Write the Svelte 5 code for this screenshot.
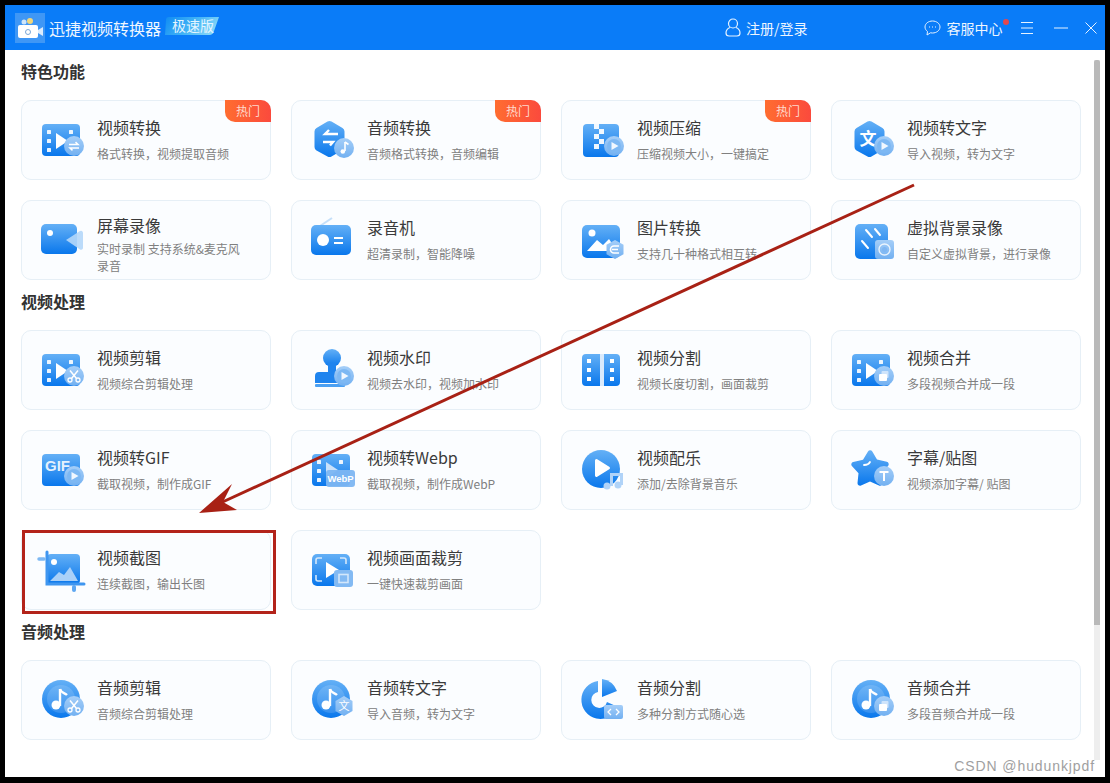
<script>
	let sections = [
		{
			title: '特色功能',
			items: [
				{ name: '视频转换', desc: '格式转换，视频提取音频', icon: 'film', badge: 'swap', hot: true },
				{ name: '音频转换', desc: '音频格式转换，音频编辑', icon: 'hexswap', badge: 'note', hot: true },
				{ name: '视频压缩', desc: '压缩视频大小，一键搞定', icon: 'zip', badge: 'play', hot: true },
				{ name: '视频转文字', desc: '导入视频，转为文字', icon: 'hextext', badge: 'play' },
				{ name: '屏幕录像', desc: '实时录制 支持系统&麦克风录音', icon: 'camera' },
				{ name: '录音机', desc: '超清录制，智能降噪', icon: 'radio' },
				{ name: '图片转换', desc: '支持几十种格式相互转', icon: 'photo', badge: 'hexc' },
				{ name: '虚拟背景录像', desc: '自定义虚拟背景，进行录像', icon: 'virtual' }
			]
		},
		{
			title: '视频处理',
			items: [
				{ name: '视频剪辑', desc: '视频综合剪辑处理', icon: 'film', badge: 'cut' },
				{ name: '视频水印', desc: '视频去水印，视频加水印', icon: 'stamp', badge: 'play' },
				{ name: '视频分割', desc: '视频长度切割，画面裁剪', icon: 'split' },
				{ name: '视频合并', desc: '多段视频合并成一段', icon: 'film', badge: 'merge' },
				{ name: '视频转GIF', desc: '截取视频，制作成GIF', icon: 'gif', badge: 'play' },
				{ name: '视频转Webp', desc: '截取视频，制作成WebP', icon: 'webp' },
				{ name: '视频配乐', desc: '添加/去除背景音乐', icon: 'musicplay' },
				{ name: '字幕/贴图', desc: '视频添加字幕/ 贴图', icon: 'star', badge: 'tee' },
				{ name: '视频截图', desc: '连续截图，输出长图', icon: 'crop' },
				{ name: '视频画面裁剪', desc: '一键快速裁剪画面', icon: 'frame' }
			]
		},
		{
			title: '音频处理',
			items: [
				{ name: '音频剪辑', desc: '音频综合剪辑处理', icon: 'disc', badge: 'cut' },
				{ name: '音频转文字', desc: '导入音频，转为文字', icon: 'disc', badge: 'wen' },
				{ name: '音频分割', desc: '多种分割方式随心选', icon: 'pie' },
				{ name: '音频合并', desc: '多段音频合并成一段', icon: 'disc', badge: 'merge' }
			]
		}
	];
</script>

{#snippet filmHoles()}
	<rect x="6" y="12" width="4" height="4" rx="0.6" fill="#fff" opacity="0.9" />
	<rect x="6" y="21" width="4" height="4" rx="0.6" fill="#fff" opacity="0.9" />
	<rect x="6" y="30" width="4" height="4" rx="0.6" fill="#fff" opacity="0.9" />
	<rect x="28" y="12" width="4" height="4" rx="0.6" fill="#fff" opacity="0.9" />
{/snippet}

{#snippet badgeArt(kind)}
	{#if kind === 'play'}
		<circle cx="33" cy="28" r="10" fill="url(#soft)" />
		<circle cx="33" cy="28" r="7" fill="#7db8f3" />
		<path d="M30.5 24l7 4-7 4z" fill="#f2f8ff" />
	{:else if kind === 'swap'}
		<circle cx="33" cy="28" r="10" fill="url(#soft)" />
		<path d="M28 26.5h9l-2.5-2.4M38 30h-9l2.5 2.4" fill="none" stroke="#fff" stroke-width="1.5" />
	{:else if kind === 'note'}
		<circle cx="33" cy="30" r="10" fill="url(#soft)" />
		<path d="M34 24v9" stroke="#fff" stroke-width="1.6" />
		<path d="M34 24l3.5 2.5" stroke="#fff" stroke-width="1.6" />
		<circle cx="31.8" cy="33.5" r="2.3" fill="#fff" />
	{:else if kind === 'cut'}
		<circle cx="33" cy="28" r="10" fill="url(#soft)" />
		<path d="M29 22.5l6.5 8M37 22.5l-6.5 8" stroke="#fff" stroke-width="1.5" />
		<circle cx="29" cy="32" r="2" fill="none" stroke="#fff" stroke-width="1.3" />
		<circle cx="37" cy="32" r="2" fill="none" stroke="#fff" stroke-width="1.3" />
	{:else if kind === 'merge'}
		<circle cx="33" cy="28" r="10" fill="url(#soft)" />
		<rect x="30.5" y="23" width="7" height="7" rx="1" fill="#cfe4fb" />
		<rect x="28" y="26" width="8" height="7" rx="1" fill="#fff" />
	{:else if kind === 'tee'}
		<circle cx="33" cy="28" r="10" fill="url(#soft)" />
		<path d="M28.5 24h9M33 24v9" stroke="#fff" stroke-width="2" />
	{:else if kind === 'wen'}
		<path d="M33 18l8.5 5v10l-8.5 5-8.5-5V23z" fill="url(#soft)" />
		<text x="33" y="32" class="mini">文</text>
	{:else if kind === 'hexc'}
		<path d="M34 22l8.500 4.800v9.400L34 41l-8.500-4.800v-9.400z" fill="url(#soft)" />
		<path d="M38 28h-5a3 3 0 0 0 0 7h5M31 31.500h6" fill="none" stroke="#fff" stroke-width="1.600" />
	{/if}
{/snippet}

{#snippet iconArt(kind)}
	{#if kind === 'film'}
		<rect x="1" y="6" width="38" height="32" rx="4" fill="url(#body)" />
		{@render filmHoles()}
		<path d="M15 15l12 8-12 8z" fill="#fff" />
	{:else if kind === 'hexswap'}
		<path d="M18 4.500a4 4 0 0 1 4 0l11 6.500a4 4 0 0 1 2 3.500v15a4 4 0 0 1-2 3.500l-11 6.500a4 4 0 0 1-4 0L7 33.500a4 4 0 0 1-2-3.500V14.500a4 4 0 0 1 2-3.500z" transform="translate(-1.500 -1)" fill="url(#body)" />
		<path d="M27 16H14l4-4M12 24h10l-3 3.500" fill="none" stroke="#fff" stroke-width="2.400" />
	{:else if kind === 'hextext'}
		<path d="M18 4.500a4 4 0 0 1 4 0l11 6.500a4 4 0 0 1 2 3.500v15a4 4 0 0 1-2 3.500l-11 6.500a4 4 0 0 1-4 0L7 33.500a4 4 0 0 1-2-3.500V14.500a4 4 0 0 1 2-3.500z" transform="translate(-1.500 -1)" fill="url(#body)" />
		<text x="17" y="27" class="wen">文</text>
	{:else if kind === 'zip'}
		<rect x="2" y="6" width="36" height="33" rx="4" fill="url(#body)" />
		<path d="M13 6h5v5h-5zM18 11h5v5h-5zM13 16h5v5h-5zM18 21h5v5h-5zM13 26h5v5h-5z" fill="#fff" opacity="0.92" />
	{:else if kind === 'camera'}
		<rect x="0" y="6" width="36" height="30" rx="5" fill="url(#body)" />
		<circle cx="9" cy="15" r="3" fill="#fff" />
		<path d="M25 22l14-9a2 2 0 0 1 3 1.500v15.500a2 2 0 0 1-3 1.500z" fill="#b4d7fa" opacity="0.9" />
	{:else if kind === 'radio'}
		<path d="M9 8l12-8" stroke="#c5dff9" stroke-width="2" />
		<rect x="0" y="7" width="40" height="30" rx="5" fill="url(#body)" />
		<circle cx="12" cy="22" r="6" fill="#fff" />
		<path d="M23 20h9M23 25h9" stroke="#fff" stroke-width="2" />
	{:else if kind === 'photo'}
		<rect x="1" y="7" width="38" height="33" rx="5" fill="url(#body)" />
		<circle cx="11" cy="15" r="3.500" fill="#fff" />
		<path d="M6 33l10-11 6 5 6-6 8 12z" fill="#fff" />
	{:else if kind === 'virtual'}
		<rect x="4" y="6" width="33" height="35" rx="5" fill="url(#body)" />
		<path d="M15 12l6 7M11 23l6 7M24 11l5 6" stroke="#fff" stroke-width="2" stroke-linecap="round" />
		<rect x="24" y="22" width="19" height="19" rx="3" fill="url(#soft)" />
		<circle cx="33.500" cy="31.500" r="5.500" fill="none" stroke="#fff" stroke-width="1.400" opacity="0.8" />
		<circle cx="33.500" cy="31.500" r="2.500" fill="#7fb6f2" />
	{:else if kind === 'stamp'}
		<circle cx="21" cy="10" r="9" fill="url(#body)" />
		<path d="M17 15h8v9h5a4 4 0 0 1 4 4v7H4v-7a4 4 0 0 1 4-4h9z" fill="#1f84ee" />
		<rect x="4" y="36" width="30" height="3" rx="1" fill="#4ba0f2" />
	{:else if kind === 'split'}
		<path d="M5 6h14v32H5a4 4 0 0 1-4-4V10a4 4 0 0 1 4-4zM23 6h12a4 4 0 0 1 4 4v24a4 4 0 0 1-4 4H23z" fill="url(#body)" />
		<rect x="19" y="6" width="4" height="32" fill="#d9eafc" />
		<path d="M6 11h4v4H6zM6 20h4v4H6zM6 29h4v4H6zM29 11h4v4h-4zM29 20h4v4h-4zM29 29h4v4h-4z" fill="#fff" />
	{:else if kind === 'gif'}
		<rect x="1" y="6" width="38" height="32" rx="4" fill="url(#body)" />
		<text x="4" y="23" class="gif">GIF</text>
	{:else if kind === 'webp'}
		<rect x="1" y="6" width="38" height="32" rx="4" fill="url(#body)" />
		{@render filmHoles()}
		<path d="M15 14l12 8-12 8z" fill="#c9e1fa" />
		<rect x="15" y="22" width="29" height="17" rx="3" fill="#7db6f2" opacity="0.95" />
		<text x="29.500" y="34" class="webp">WebP</text>
	{:else if kind === 'musicplay'}
		<circle cx="20" cy="21" r="19" fill="url(#body)" />
		<path d="M14 12.500a1.500 1.500 0 0 1 2.200-1.300l12 7.500a1.500 1.500 0 0 1 0 2.600l-12 7.500a1.500 1.500 0 0 1-2.200-1.300z" fill="#fff" />
		<path d="M29 25h13v12h-3v-9h-7v10h-3z" fill="#b0d3f8" />
		<circle cx="26" cy="38" r="3.500" fill="#b0d3f8" />
		<circle cx="37" cy="37" r="3.500" fill="#b0d3f8" />
	{:else if kind === 'star'}
		<path d="M17 3.500a2.500 2.500 0 0 1 4.300 0l4.700 8 9.800 2.300a2.500 2.500 0 0 1 1.300 4.100l-6.600 7.200 1 9.800a2.500 2.500 0 0 1-3.500 2.500L19 33.600l-9 4a2.500 2.500 0 0 1-3.500-2.500l1-9.800-6.600-7.200a2.500 2.500 0 0 1 1.300-4.100l9.800-2.300z" fill="url(#body)" />
		<path d="M13 17c3 0 5-1 6-3" fill="none" stroke="#fff" stroke-width="1.800" stroke-linecap="round" />
	{:else if kind === 'crop'}
		<rect x="6" y="6" width="33" height="30" rx="4" fill="url(#body)" />
		<path d="M6 4v32h37" fill="none" stroke="#3f96f0" stroke-width="3" stroke-linecap="round" />
		<path d="M-2 11h5" stroke="#7db8f3" stroke-width="3.500" stroke-linecap="round" />
		<path d="M33 39v3" stroke="#5ea7f1" stroke-width="4" stroke-linecap="round" />
		<circle cx="13" cy="14" r="3" fill="#fff" />
		<path d="M9 33l9-9 5 3 6-8 8 14z" fill="#a9d0f8" />
	{:else if kind === 'frame'}
		<rect x="1" y="6" width="38" height="32" rx="5" fill="url(#body)" />
		<path d="M5 16v-4a2 2 0 0 1 2-2h4M29 10h4a2 2 0 0 1 2 2v4M5 27v4a2 2 0 0 0 2 2h4" fill="none" stroke="#d3e7fb" stroke-width="1.600" />
		<path d="M15 14l13 8-13 8z" fill="#fff" />
		<rect x="23" y="22" width="19" height="17" rx="3" fill="#83baf3" />
		<rect x="28" y="26.500" width="9" height="8" fill="none" stroke="#d3e7fb" stroke-width="1.600" />
	{:else if kind === 'disc'}
		<circle cx="20" cy="21" r="19" fill="url(#body)" />
		<circle cx="20" cy="21" r="14" fill="#fff" opacity="0.14" />
		<path d="M19 11v17" stroke="#fff" stroke-width="2.400" />
		<path d="M19 11c1 4 5 4 7 6" fill="none" stroke="#fff" stroke-width="2.400" />
		<circle cx="15" cy="27" r="4.500" fill="#fff" />
	{:else if kind === 'pie'}
		<path d="M17 3a19 19 0 1 0 20 26L26 24a8 8 0 1 1-9-10z" fill="url(#body)" />
		<path d="M21 1a19 19 0 0 1 15 12l-15 6z" fill="url(#body)" />
		<rect x="23" y="27" width="19" height="14" rx="2" fill="url(#soft)" />
		<path d="M30 31l-3 3 3 3M35 31l3 3-3 3" fill="none" stroke="#fff" stroke-width="1.300" />
	{/if}
{/snippet}

<svg class="defs" width="0" height="0" aria-hidden="true">
	<defs>
		<linearGradient id="body" x1="0" y1="0" x2="0" y2="1">
			<stop offset="0" stop-color="#64b0f6" />
			<stop offset="1" stop-color="#0977ec" />
		</linearGradient>
		<linearGradient id="soft" x1="0" y1="0" x2="0" y2="1">
			<stop offset="0" stop-color="#a5cef8" />
			<stop offset="1" stop-color="#72b0f1" />
		</linearGradient>
		<linearGradient id="pill" x1="0" y1="0" x2="1" y2="0.300">
			<stop offset="0" stop-color="#0f8bf3" />
			<stop offset="0.55" stop-color="#3fb2f6" />
			<stop offset="1" stop-color="#7fd4f8" />
		</linearGradient>
	</defs>
</svg>

<div class="window">
	<header class="topbar">
		<div class="logo">
			<svg width="30" height="30" viewBox="0 0 30 30">
				<rect width="30" height="30" fill="#3f97f5" />
				<rect x="3" y="12" width="20" height="13" rx="2" fill="#fff" />
				<path d="M23 17l5-3v9l-5-3z" fill="#dcecfd" />
				<circle cx="9" cy="9" r="2.500" fill="#cfe6fb" />
				<circle cx="15" cy="8" r="3" fill="#f2d77c" />
				<circle cx="13" cy="19" r="2.500" fill="none" stroke="#7aa7d8" stroke-width="1" />
			</svg>
		</div>
		<span class="app-name">迅捷视频转换器</span>
		<span class="speed">
			<svg width="54" height="18" viewBox="0 0 54 18"><path d="M4 0h50l-5 14a5 5 0 0 1-4 4H0l1-15a3 3 0 0 1 3-3z" fill="url(#pill)" /></svg>
			<em>极速版</em>
		</span>
		<div class="login">
			<svg width="16" height="19" viewBox="0 0 16 19" fill="none" stroke="#e6f2ff" stroke-width="1.200">
				<circle cx="8" cy="5.500" r="4.500" />
				<path d="M5 9.500C2.500 10.500 1 12.500 1 15a3 3 0 0 0 3 3h8a3 3 0 0 0 3-3c0-2.500-1.500-4.500-4-5.500" />
			</svg>
			<span>注册/登录</span>
		</div>
		<div class="service">
			<svg width="17" height="16" viewBox="0 0 17 16" fill="none" stroke="#e6f2ff" stroke-width="1">
				<path d="M8.500 1C4.400 1 1 3.600 1 7c0 1.800 1 3.400 2.500 4.500L3 15l3.500-2.200c.6.100 1.300.200 2 .200 4.100 0 7.500-2.700 7.500-6s-3.400-6-7.500-6z" />
				<path d="M5 7h1M8 7h1M11 7h1" />
			</svg>
			<span>客服中心</span>
			<i class="dot"></i>
		</div>
		<div class="win-btns">
			<svg width="12" height="14" viewBox="0 0 12 14" stroke="#e6f2ff"><path d="M0 1.500h12M0 7h12M0 12.500h12" /></svg>
			<svg width="14" height="14" viewBox="0 0 14 14" stroke="#e6f2ff"><path d="M0 7h14" /></svg>
			<svg width="12" height="12" viewBox="0 0 12 12" stroke="#e6f2ff"><path d="M0.500 0.500l11 11M11.500 0.500l-11 11" /></svg>
		</div>
	</header>

	<div class="main">
		<div class="content">
			{#each sections as section}
				<h2>{section.title}</h2>
				<div class="grid">
					{#each section.items as item}
						<div class="card">
							{#if item.hot}
								<span class="hot">热门</span>
							{/if}
							<svg class="icon" width="46" height="44" viewBox="0 0 46 44">
								{@render iconArt(item.icon)}
								{#if item.badge}
									{@render badgeArt(item.badge)}
								{/if}
							</svg>
							<div class="text" class:wrapped={item.desc.length > 14}>
								<div class="name">{item.name}</div>
								<div class="desc">{item.desc}</div>
							</div>
						</div>
					{/each}
				</div>
			{/each}
		</div>
		<div class="scrollbar"><div class="thumb"></div></div>
	</div>

	<!-- annotations drawn on top of the screenshot -->
	<svg class="arrow" width="1110" height="783" viewBox="0 0 1110 783">
		<path d="M914 185L216 505" stroke="#a82115" stroke-width="3" />
		<path d="M199 513l33-29-9 18 14 8z" fill="#a82115" />
	</svg>
	<div class="highlight"></div>
	<div class="watermark">CSDN @hudunkjpdf</div>
</div>

<style>
	:global(html),
	:global(body) {
		background: #000;
	}

	.defs {
		position: absolute;
	}

	.window {
		width: 1100px;
		height: 772px;
		margin: 5px 0 0 5px;
		background: #fff;
		overflow: hidden;
		font-family: 'Noto Sans CJK SC', 'Liberation Sans', sans-serif;
	}

	.topbar {
		height: 45px;
		background: #0a7cf8;
		display: flex;
		align-items: center;
		padding-left: 10px;
		color: #eef6ff;
		font-size: 14px;
	}

	.logo {
		width: 30px;
		height: 30px;
		margin-top: 1px;
	}

	.app-name {
		font-size: 16px;
		margin-left: 4px;
	}

	.speed {
		position: relative;
		width: 54px;
		height: 18px;
		margin-left: 4px;
		margin-top: -3px;
	}

	.speed svg {
		display: block;
	}

	.speed em {
		position: absolute;
		left: 7px;
		top: -2px;
		font-style: normal;
		font-size: 14px;
		line-height: 20px;
		color: #e4f5ff;
	}

	.login {
		display: flex;
		align-items: center;
		gap: 5px;
		margin-left: 506px;
	}

	.service {
		position: relative;
		display: flex;
		align-items: center;
		gap: 6px;
		margin-left: 116px;
	}

	.dot {
		position: absolute;
		right: -6px;
		top: 1px;
		width: 6px;
		height: 6px;
		border-radius: 50%;
		background: #e5484d;
	}

	.win-btns {
		display: flex;
		align-items: center;
		gap: 21px;
		margin-left: 18px;
	}

	.win-btns svg:last-child {
		margin-left: -4px;
	}

	.main {
		display: flex;
		height: 727px;
	}

	.content {
		width: 1089px;
		padding-left: 16px;
		box-sizing: border-box;
	}

	h2 {
		margin: 0;
		height: 50px;
		line-height: 43px;
		font-size: 16px;
		font-weight: 700;
		color: #333;
	}

	.grid {
		display: grid;
		grid-template-columns: repeat(4, 250px);
		grid-auto-rows: 80px;
		gap: 20px;
	}

	.card {
		position: relative;
		display: flex;
		align-items: center;
		box-sizing: border-box;
		padding-left: 19px;
		background: #fbfdff;
		border: 1px solid #e6eff6;
		border-radius: 10px;
	}

	.hot {
		position: absolute;
		right: -1px;
		top: -1px;
		width: 46px;
		height: 22px;
		border-radius: 0 10px 0 10px;
		background: linear-gradient(90deg, #ff6d30, #fb4a3d);
		color: #ffd9cc;
		font-size: 12px;
		line-height: 21px;
		text-align: center;
	}

	.icon {
		flex: none;
		overflow: visible;
	}

	.text {
		margin-left: 10px;
		width: 150px;
		padding-bottom: 3px;
	}

	.name {
		font-size: 16px;
		line-height: 24px;
		color: #3a3a3a;
		white-space: nowrap;
	}

	.desc {
		margin-top: 7px;
		font-size: 12px;
		line-height: 16px;
		color: #808080;
	}

	.wrapped {
		margin-top: 7px;
		padding-bottom: 0;
	}

	.wrapped .desc {
		margin-top: 3px;
		line-height: 17px;
	}

	.wen {
		font-size: 17px;
		font-weight: 700;
		fill: #fff;
		text-anchor: middle;
	}

	.mini {
		font-size: 11px;
		fill: #fff;
		text-anchor: middle;
	}

	.gif {
		font-family: 'Liberation Sans', sans-serif;
		font-size: 15px;
		font-weight: 700;
		fill: #e4f1fd;
	}

	.webp {
		font-family: 'Liberation Sans', sans-serif;
		font-size: 9.5px;
		font-weight: 700;
		fill: #fff;
		text-anchor: middle;
	}

	.scrollbar {
		width: 6px;
		height: 700px;
		margin-top: 10px;
		background: #eee;
	}

	.thumb {
		height: 565px;
		background: #b9b9b9;
		border-radius: 2px 2px 0 0;
	}

	.arrow {
		position: absolute;
		left: 0;
		top: 0;
		pointer-events: none;
	}

	.highlight {
		position: absolute;
		left: 22px;
		top: 530px;
		width: 254px;
		height: 84px;
		box-sizing: border-box;
		border: 3px solid #b3231a;
	}

	.watermark {
		position: absolute;
		right: 15px;
		top: 757px;
		font-family: 'Liberation Sans', sans-serif;
		font-size: 14px;
		line-height: 18px;
		letter-spacing: 0.9px;
		color: #a0a0a0;
	}
</style>
